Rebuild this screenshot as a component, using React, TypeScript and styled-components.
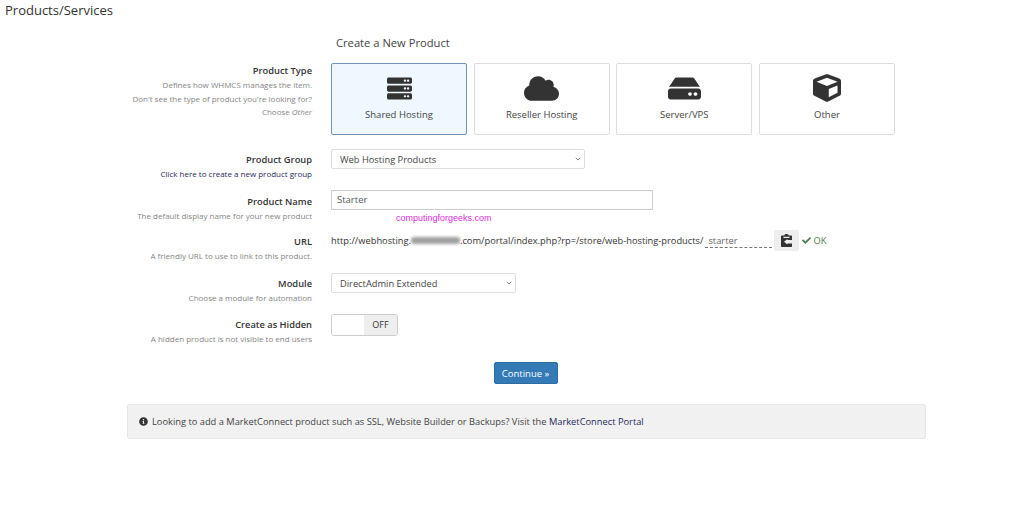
import React from 'react';
import styled, { createGlobalStyle } from 'styled-components';
import { FaCheck, FaCloud, FaCube, FaHdd, FaInfoCircle, FaServer } from 'react-icons/fa';

const GlobalStyle = createGlobalStyle`
    html, body {
        margin: 0;
        padding: 0;
        background: #fff;
        color: #333;
        font-family: "Open Sans", "Liberation Sans", sans-serif;
    }
`

type FieldRowProps = {
    label: string;
    help?: React.ReactNode;
    height: number;
    gap: number;
    labelOffset: number;
    children: React.ReactNode;
}

const FieldRow = (props: FieldRowProps) => (
    <Row height={props.height} gap={props.gap}>
        <LabelCol offset={props.labelOffset}>
            <Label>{props.label}</Label>
            {props.help}
        </LabelCol>
        <div>{props.children}</div>
    </Row>
)

const ClipboardIcon = () => (
    <svg width="11" height="13" viewBox="0 0 11 13" fill="#333">
        <path d="M1 1.6h2.2C3.4.7 4.3 0 5.5 0s2.1.7 2.3 1.6H10c.6 0 1 .4 1 1V6H6.4v-.9L3 7.8l3.4 2.7v-1H11v2.4c0 .6-.4 1-1 1H1c-.6 0-1-.4-1-1V2.6c0-.6.4-1 1-1zm1.5 1.2v1.1h6V2.8h-6z" />
    </svg>
)

const types = [
    { name: 'Shared Hosting', icon: <FaServer size={25} />, active: true },
    { name: 'Reseller Hosting', icon: <FaCloud size={35} />, active: false },
    { name: 'Server/VPS', icon: <FaHdd size={33} />, active: false },
    { name: 'Other', icon: <FaCube size={28} />, active: false },
]

export default function App() {
    return (
        <Page>
            <GlobalStyle />
            <Heading>Products/Services</Heading>
            <Form>
                <Title>Create a New Product</Title>
                <FieldRow
                    label="Product Type"
                    height={72}
                    gap={14}
                    labelOffset={0}
                    help={
                        <Help>
                            Defines how WHMCS manages the item.<br />
                            Don't see the type of product you're looking for?<br />
                            Choose <em>Other</em>
                        </Help>
                    }
                >
                    <Cards>
                        {types.map(t => (
                            <Card key={t.name} active={t.active}>
                                <CardIcon>{t.icon}</CardIcon>
                                <CardName>{t.name}</CardName>
                            </Card>
                        ))}
                    </Cards>
                </FieldRow>
                <FieldRow
                    label="Product Group"
                    height={20}
                    gap={21}
                    labelOffset={3}
                    help={<HelpLink>Click here to create a new product group</HelpLink>}
                >
                    <SelectBox width={254}>
                        Web Hosting Products
                        <Chevron />
                    </SelectBox>
                </FieldRow>
                <FieldRow
                    label="Product Name"
                    height={20}
                    gap={20}
                    labelOffset={4}
                    help={<Help>The default display name for your new product</Help>}
                >
                    <TextBox>Starter</TextBox>
                    <Watermark>computingforgeeks.com</Watermark>
                </FieldRow>
                <FieldRow
                    label="URL"
                    height={21}
                    gap={22}
                    labelOffset={4}
                    help={<Help>A friendly URL to use to link to this product.</Help>}
                >
                    <UrlLine>
                        http://webhosting.<Smudge />.com/portal/index.php?rp=/store/web-hosting-products/
                        <Slug>starter</Slug>
                        <PasteButton><ClipboardIcon /></PasteButton>
                        <Ok><FaCheck size={9} /> OK</Ok>
                    </UrlLine>
                </FieldRow>
                <FieldRow
                    label="Module"
                    height={20}
                    gap={21}
                    labelOffset={3}
                    help={<Help>Choose a module for automation</Help>}
                >
                    <SelectBox width={185}>
                        DirectAdmin Extended
                        <Chevron />
                    </SelectBox>
                </FieldRow>
                <FieldRow
                    label="Create as Hidden"
                    height={22}
                    gap={26}
                    labelOffset={3}
                    help={<Help>A hidden product is not visible to end users</Help>}
                >
                    <Toggle>
                        <ToggleHandle />
                        <ToggleState>OFF</ToggleState>
                    </Toggle>
                </FieldRow>
                <Actions>
                    <ContinueButton>Continue »</ContinueButton>
                </Actions>
                <Notice>
                    <FaInfoCircle size={9} color="#333" />
                    <span>
                        Looking to add a MarketConnect product such as SSL, Website Builder or Backups? Visit the{' '}
                        <NoticeLink>MarketConnect Portal</NoticeLink>
                    </span>
                </Notice>
            </Form>
        </Page>
    )
}

const Chevron = () => (
    <ChevronSvg width="6" height="4" viewBox="0 0 7 5" fill="none" stroke="#666" strokeWidth="1">
        <path d="M.7 1l2.8 2.8L6.3 1" />
    </ChevronSvg>
)

const Page = styled.div`
    width: 1024px;
    height: 506px;
    overflow: hidden;
`

const Heading = styled.h1`
    margin: 0;
    padding: 2px 0 0 5px;
    font-size: 13px;
    line-height: 16px;
    font-weight: 400;
    color: #333;
`

const Form = styled.div`
    width: 799px;
    margin-left: 127px;
    padding-top: 17px;
`

const Title = styled.h2`
    margin: 0 0 12px 209px;
    font-size: 11.2px;
    line-height: 16px;
    font-weight: 400;
    color: #444;
`

const Row = styled.div<{ height: number; gap: number }>`
    display: grid;
    grid-template-columns: 185px 1fr;
    column-gap: 19px;
    height: ${props => props.height}px;
    margin-bottom: ${props => props.gap}px;
`

const LabelCol = styled.div<{ offset: number }>`
    padding-top: ${props => props.offset}px;
    text-align: right;
`

const Label = styled.div`
    font-size: 9.3px;
    line-height: 15px;
    font-weight: 600;
    color: #333;
`

const Help = styled.div`
    font-size: 8px;
    line-height: 13.5px;
    color: #858585;
`

const HelpLink = styled.div`
    font-size: 8px;
    line-height: 13.5px;
    color: #1f2a5c;
`

const Cards = styled.div`
    display: flex;
    gap: 6.67px;
`

const Card = styled.div<{ active: boolean }>`
    box-sizing: border-box;
    width: 136px;
    height: 72px;
    display: flex;
    flex-direction: column;
    align-items: center;
    border: 1px solid ${props => props.active ? '#6f93b5' : '#ddd'};
    border-radius: 2px;
    background: ${props => props.active ? '#f0f8ff' : '#fff'};
`

const CardIcon = styled.div`
    height: 40px;
    margin-top: 4px;
    margin-bottom: -1px;
    display: flex;
    align-items: center;
    color: #333;
`

const CardName = styled.div`
    font-size: 9.5px;
    line-height: 16px;
    color: #444;
`

const SelectBox = styled.div<{ width: number }>`
    box-sizing: border-box;
    width: ${props => props.width}px;
    height: 20px;
    display: flex;
    align-items: center;
    justify-content: space-between;
    padding: 0 3px 0 8px;
    border: 1px solid #ddd;
    border-radius: 2px;
    font-size: 9.3px;
    color: #444;
`

const ChevronSvg = styled.svg`
    display: block;
`

const TextBox = styled.div`
    box-sizing: border-box;
    width: 322px;
    height: 20px;
    padding: 0 5px;
    border: 1px solid #ccc;
    font-size: 9.5px;
    line-height: 18px;
    color: #555;
`

const Watermark = styled.div`
    position: absolute;
    left: 396px;
    top: 213px;
    font-family: "Liberation Sans", Arial, sans-serif;
    font-size: 9px;
    line-height: 11px;
    color: #e22ee0;
`

const UrlLine = styled.div`
    display: flex;
    align-items: center;
    height: 21px;
    font-size: 9.3px;
    color: #333;
    white-space: nowrap;
`

const Smudge = styled.span`
    display: inline-block;
    width: 49px;
    height: 7px;
    background: #a0a0a0;
    border-radius: 3px;
    filter: blur(1.5px);
`

const Slug = styled.span`
    width: 67px;
    height: 15px;
    margin: 0 2px;
    padding-left: 3px;
    box-sizing: border-box;
    line-height: 15px;
    color: #666;
    border-bottom: 1px dashed #777;
`

const PasteButton = styled.span`
    width: 25px;
    height: 21px;
    display: flex;
    align-items: center;
    justify-content: center;
    background: #eee;
    border-radius: 2px;
`

const Ok = styled.span`
    display: flex;
    align-items: center;
    gap: 2px;
    margin-left: 3px;
    color: #4f7a50;
`

const Toggle = styled.div`
    box-sizing: border-box;
    width: 67px;
    height: 22px;
    display: flex;
    border: 1px solid #ccc;
    border-radius: 3px;
    overflow: hidden;
`

const ToggleHandle = styled.div`
    width: 32px;
    background: #fff;
`

const ToggleState = styled.div`
    flex: 1;
    background: #eee;
    font-size: 9px;
    line-height: 20px;
    text-align: center;
    color: #333;
`

const Actions = styled.div`
    display: flex;
    justify-content: center;
    margin: 0 0 20px -2px;
`

const ContinueButton = styled.button`
    width: 64px;
    height: 22px;
    padding: 0;
    border: 1px solid #2e6da4;
    border-radius: 2px;
    background: #337ab7;
    color: #fff;
    font-family: inherit;
    font-size: 9.5px;
`

const Notice = styled.div`
    box-sizing: border-box;
    height: 35px;
    display: flex;
    align-items: center;
    gap: 4px;
    padding-left: 11px;
    background: #f1f1f1;
    border: 1px solid #e6e6e6;
    border-radius: 2px;
    font-size: 9.3px;
    color: #444;
`

const NoticeLink = styled.span`
    color: #1f2a5c;
`
